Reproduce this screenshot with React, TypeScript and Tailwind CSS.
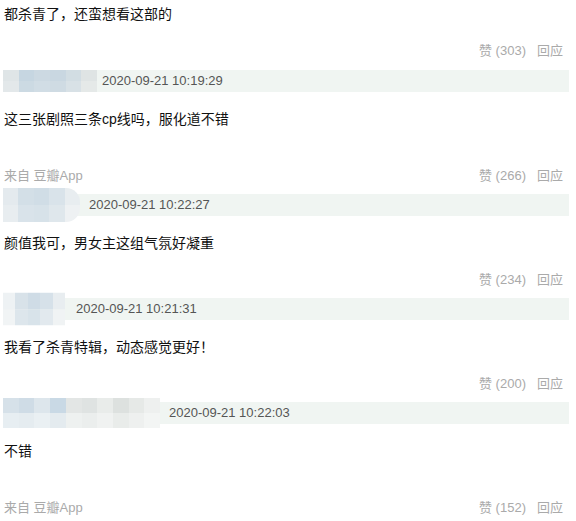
import React from "react";

type Entry = {
  // covered user name: mosaic cells, size, where the date starts
  blur: string;
  dateX: string;
  cells: string[][];
  date: string;
  text: string;
  likes: number;
  source?: boolean;
};

const entries: Entry[] = [
  {
    blur: "w-[94px] h-[22px]",
    dateX: "pl-[99px]",
    cells: [
      ["#dfe5e7", "#c6d6e1", "#ccd9e2", "#c9d7e1", "#d2dde3", "#dfe4e4"],
      ["#e3e8ea", "#ccdae3", "#d1dde5", "#cfdbe3", "#d8e1e6", "#e5e9e8"],
    ],
    date: "2020-09-21 10:19:29",
    text: "这三张剧照三条cp线吗，服化道不错",
    likes: 266,
    source: true,
  },
  {
    blur: "w-[77px] h-[34px] rounded-r-[14px]",
    dateX: "pl-[86px]",
    cells: [
      ["#e4eaee", "#d3dfe7", "#d0dde6", "#d9e3ea", "#e8edf0"],
      ["#e8edf0", "#d9e3ea", "#d7e2e9", "#dfe7ec", "#eef1f3"],
    ],
    date: "2020-09-21 10:22:27",
    text: "颜值我可，男女主这组气氛好凝重",
    likes: 234,
  },
  {
    blur: "w-[62px] h-[33px]",
    dateX: "pl-[73px]",
    cells: [
      ["#eef2f4", "#d8e2e9", "#cfdce6", "#d6e1e9", "#e8edf0"],
      ["#f1f4f5", "#dde6ec", "#d8e3ea", "#e2e9ee", "#f0f3f4"],
    ],
    date: "2020-09-21 10:21:31",
    text: "我看了杀青特辑，动态感觉更好！",
    likes: 200,
  },
  {
    blur: "w-[157px] h-[30px]",
    dateX: "pl-[166px]",
    cells: [
      ["#d6e1e9", "#cfdce6", "#dde6ec", "#c9d9e5", "#e3e6e5", "#dfe3e2", "#e9ecea", "#dde1df", "#e6e9e7", "#eef0ef"],
      ["#e7eef2", "#e5ecf0", "#eaf0f3", "#e4ebef", "#eef1f0", "#ebeeed", "#f0f2f1", "#e9ecea", "#eef0ef", "#f3f5f4"],
    ],
    date: "2020-09-21 10:22:03",
    text: "不错",
    likes: 152,
    source: true,
  },
];

function Actions({ likes, source }: { likes: number; source?: boolean }) {
  return (
    <div className="flex h-5 items-center justify-between pr-[13px] text-[13px] leading-5 text-[#aaaaaa]">
      <span className="pl-[4px]">{source ? "来自 豆瓣App" : ""}</span>
      <span className="flex gap-[11px]">
        <span>赞 ({likes})</span>
        <span>回应</span>
      </span>
    </div>
  );
}

function Header({ e }: { e: Entry }) {
  return (
    <div className={`relative mr-[7px] ml-[3px] flex h-[22px] items-center bg-[#f0f5f2] ${e.dateX}`}>
      <div className={`absolute top-1/2 left-0 flex -translate-y-1/2 flex-col overflow-hidden ${e.blur}`}>
        {e.cells.map((row, i) => (
          <div key={i} className="flex flex-1">
            {row.map((col, j) => (
              <div key={j} className="flex-1" style={{ backgroundColor: col }} />
            ))}
          </div>
        ))}
      </div>
      <span className="relative text-[13px] text-[#555555]">{e.date}</span>
    </div>
  );
}

export default function App() {
  return (
    <div
      className="h-[521px] w-[576px] overflow-hidden bg-white pt-[4px]"
      style={{ fontFamily: '"Liberation Sans", "Noto Sans CJK SC", sans-serif' }}
    >
      <p className="h-5 pl-[4px] text-[14px] leading-5 text-[#111111]">都杀青了，还蛮想看这部的</p>
      <div className="mt-[17px]">
        <Actions likes={303} />
      </div>

      {entries.map((e, i) => (
        <div key={i} className={i === 0 ? "mt-[9px]" : "mt-2"}>
          <Header e={e} />
          <p className="mt-[17px] h-5 pl-[4px] text-[14px] leading-5 text-[#111111]">{e.text}</p>
          <div className={e.source ? "mt-[37px]" : "mt-[17px]"}>
            <Actions likes={e.likes} source={e.source} />
          </div>
        </div>
      ))}
    </div>
  );
}
